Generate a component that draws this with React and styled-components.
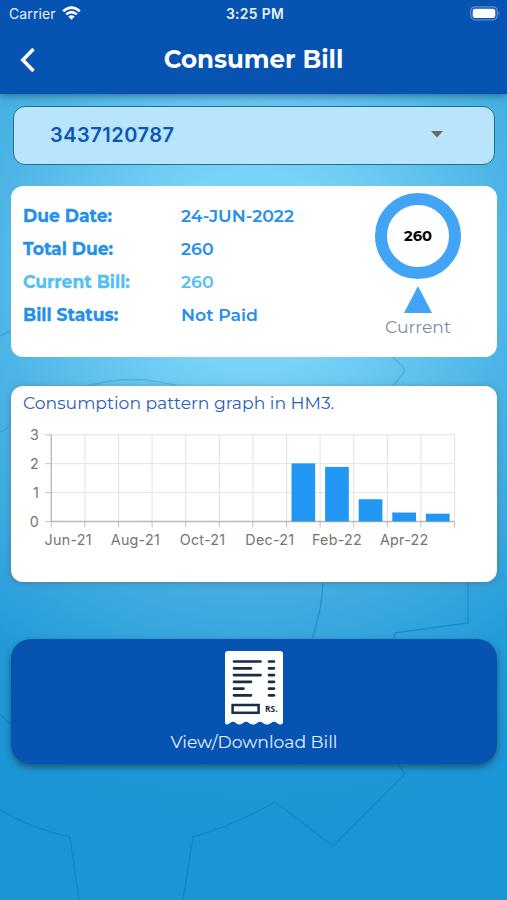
import React from 'react';

import styled, { createGlobalStyle } from 'styled-components';


/////

const GlobalStyle = createGlobalStyle`
    *{
        box-sizing: border-box;
    }
    body{
        margin: 0;
        font-family: Montserrat, Inter, "Liberation Sans", sans-serif;
    }
`

const PageWrapper = styled.div`
    position: relative;
    height: 900px;
    overflow: hidden;
    background: radial-gradient(circle at 253px 270px,
        #80d8fb 0px, #79d2f7 100px, #4db5e6 258px, #3eabe0 340px, #229ad7 450px, #1b95d5 560px);
`

const GearLines = styled.svg`
    position: absolute;
    top: 0;
    left: 0;
    fill: none;
    stroke: #0878b8;
    stroke-width: 1.4;
    opacity: 0.48;
`

const Header = styled.header`
    position: relative;
    height: 94px;
    background-color: #0753b2;
    color: #fff;
    box-shadow: 0 2px 7px rgba(30, 70, 95, 0.6);
`

const StatusBar = styled.div`
    display: grid;
    grid-template-columns: 1fr auto 1fr;
    align-items: center;
    height: 27px;
    padding: 0 6px 0 9px;
    font-family: Inter, sans-serif;
    font-size: 14px;
    color: #e9f1ff;
    .carrier{
        display: flex;
        align-items: center;
        gap: 6px;
        letter-spacing: 0.1px;
    }
    .clock{
        font-size: 13.8px;
        font-weight: 600;
        letter-spacing: 0.35px;
    }
    .battery{
        justify-self: end;
    }
    svg{
        display: block;
    }
`

const TitleBar = styled.div`
    display: grid;
    grid-template-columns: 56px 1fr 56px;
    align-items: center;
    height: 65px;
    h1{
        margin: 0;
        padding-bottom: 2px;
        text-align: center;
        font-size: 24.5px;
        font-weight: 700;
    }
    svg{
        display: block;
        margin-left: 20px;
    }
`

const Content = styled.main`
    position: relative;
    display: flex;
    flex-direction: column;
    padding: 12px 10px 0 11px;
`

const AccountSelect = styled.div`
    display: flex;
    align-items: center;
    justify-content: space-between;
    height: 59px;
    margin: 0 2px 0 2px;
    padding: 0 51px 2px 36px;
    border: 1.5px solid #286f86;
    border-radius: 12px;
    background-color: #b8e5fc;
    color: #0d56b3;
    font-family: Inter, sans-serif;
    font-size: 20px;
    font-weight: 600;
    letter-spacing: 0.5px;
`

const Card = styled.section`
    border-radius: 12px;
    background-color: #fff;
`

const BillCard = styled(Card)`
    display: flex;
    justify-content: space-between;
    height: 171px;
    margin-top: 21px;
    padding: 7px 36px 0 12px;
`

const BillRows = styled.div`
    padding-top: 6px;
`

const BillRow = styled.div`
    display: grid;
    grid-template-columns: 158px auto;
    height: 33px;
    line-height: 33px;
    font-size: 17.3px;
    font-weight: 600;
    color: ${props => props.$light ? '#55bff2' : '#2590e9'};
    .row-title{
        font-size: 17.2px;
        font-weight: 700;
        -webkit-text-stroke: 0.3px currentColor;
    }
`

const Gauge = styled.div`
    display: flex;
    flex-direction: column;
    align-items: center;
    width: 86px;
    .ring{
        display: flex;
        align-items: center;
        justify-content: center;
        width: 86px;
        height: 86px;
        border: 12px solid #42a4f5;
        border-radius: 50%;
        font-size: 14.7px;
        font-weight: 700;
        color: #000;
    }
    .arrow{
        width: 0;
        height: 0;
        margin-top: 7px;
        border: solid transparent;
        border-width: 0 14.5px 27px;
        border-bottom-color: #42a4f5;
    }
    .gauge-label{
        margin-top: 3px;
        font-size: 17.2px;
        line-height: 21px;
        color: #78909c;
    }
`

const GraphCard = styled(Card)`
    height: 196px;
    margin-top: 29px;
    box-shadow: 0 1px 6px rgba(85, 105, 115, 0.6);
    .graph-title{
        height: 35px;
        padding-left: 12px;
        line-height: 33px;
        font-size: 17.2px;
        color: #2c5ebb;
    }
    svg{
        display: block;
    }
    text{
        font-family: Inter, sans-serif;
        font-size: 14.3px;
        letter-spacing: 0.25px;
        fill: #747474;
    }
`

const BillButton = styled.button`
    display: flex;
    flex-direction: column;
    align-items: center;
    height: 125px;
    margin-top: 57px;
    padding: 12px 0 0;
    border: 0;
    border-radius: 20px;
    background-color: #0753b2;
    box-shadow: 0 3px 6px rgba(25, 65, 85, 0.75);
    color: #e4efff;
    font-family: inherit;
    font-size: 17.2px;
    line-height: 20px;
    svg{
        display: block;
        margin-bottom: 7px;
    }
`


/////////////

const billRows = [
    { title: 'Due Date:', value: '24-JUN-2022' },
    { title: 'Total Due:', value: '260' },
    { title: 'Current Bill:', value: '260', light: true },
    { title: 'Bill Status:', value: 'Not Paid' },
];

const months = ['Jun-21', 'Jul-21', 'Aug-21', 'Sep-21', 'Oct-21', 'Nov-21',
                'Dec-21', 'Jan-22', 'Feb-22', 'Mar-22', 'Apr-22', 'May-22'];
const usage = [0, 0, 0, 0, 0, 0, 0, 2.01, 1.89, 0.77, 0.31, 0.27];


const ConsumptionGraph = () => {

    const left = 40.3;
    const bottom = 100.5;
    const step = 33.6;
    const unit = 28.9;
    const right = left + step * 12;

    return (
        <svg width="486" height="140" viewBox="0 0 486 140">
            {/* grid */}
            {[0, 1, 2, 3].map((n) => (
                <g key={n}>
                    <path d={`M${left} ${bottom - n * unit}H${right}`} stroke="#e2e2e2" />
                    <path d={`M${left - 6} ${bottom - n * unit}H${left}`} stroke="#c0c0c0" />
                    <text x="28" y={bottom - n * unit + 5.2} textAnchor="end">{n}</text>
                </g>
            ))}
            {Array.from({ length: 13 }, (_, i) => (
                <g key={i}>
                    <path d={`M${left + i * step} ${bottom - unit * 3}V${bottom}`} stroke="#e2e2e2" />
                    <path d={`M${left + i * step} ${bottom}v6`} stroke="#c0c0c0" />
                </g>
            ))}
            <path d={`M${left} ${bottom - unit * 3}V${bottom}H${right}`} fill="none" stroke="#b8b8b8" strokeWidth="1.3" />

            {/* bars */}
            {usage.map((v, i) => v > 0 && (
                <rect key={i} x={left + i * step + 5} y={bottom - v * unit}
                      width="23.7" height={v * unit} fill="#2196f3" />
            ))}
            {months.map((m, i) => i % 2 === 0 && (
                <text key={m} x={left + (i + 0.5) * step + 0.1} y="124" textAnchor="middle">{m}</text>
            ))}
        </svg>
    );
};


const ReceiptIcon = () => (
    <svg width="58" height="74" viewBox="0 0 58 74">
        <path fill="#fff" d="M3 0H55Q58 0 58 3V72Q55.5 75 52 72Q49 69.5 46 72Q42 75 38 72Q35 69.5 32 72Q28 75 24 72Q21 69.5 18 72Q14 75 11 72Q8 69.5 5 72Q0 75.5 0 71V3Q0 0 3 0Z" />
        <path stroke="#182e48" strokeWidth="2.7" strokeLinecap="round" fill="none"
              d="M9 10.5H35.5M9 17.3H26M9 24.1H35.5M9 30.8H26M9 37.6H18.5M9 44.3H26M44 10.5H49M44 17.3H49M44 24.1H49M44 30.8H49M44 37.6H49M44 44.3H49" />
        <rect x="7.6" y="54" width="26" height="7.8" fill="none" stroke="#182e48" strokeWidth="2.5" />
        <text x="40" y="61.2" fontFamily="Open Sans, sans-serif" fontSize="8.4" fontWeight="700" fill="#182e48">RS.</text>
    </svg>
);


const App = () => {

    return (

        <PageWrapper>

            <GlobalStyle />

            {/* gear outlines in the background */}
            <GearLines width="507" height="900" viewBox="0 0 507 900">
                <path d="M0 336L12 330M392 357Q401 364 405 370Q401 376 394 385" opacity="0.5" />
                <path d="M0 432Q7 430 12 421M82 388Q132 371 183 388" opacity="0.5" />
                <path d="M323 581Q322 612 311 642M468 581V623L395 633L393 642" />
                <path d="M0 715L12 725M0 810Q33 829 70 837L79 900M183 900L193 837Q235 825 275 802L333 846L405 774L397 763" />
            </GearLines>


            <Header>
                <StatusBar>
                    <div className="carrier">
                        Carrier
                        <svg width="19" height="15" viewBox="0 0 19 15">
                            <path d="M1.2 5.3Q9.5 -2 17.8 5.3M4.2 8.4Q9.5 3.8 14.8 8.4" fill="none" stroke="#fff" strokeWidth="2.5" />
                            <path d="M6.3 10.6Q9.5 7.8 12.7 10.6L9.5 13.8Z" fill="#fff" />
                        </svg>
                    </div>
                    <div className="clock">3:25 PM</div>
                    <svg className="battery" width="31" height="15" viewBox="0 0 31 15">
                        <rect x="0.8" y="0.8" width="26.4" height="13" rx="4" fill="none" stroke="#5c8fd0" strokeWidth="1.2" />
                        <rect x="2.7" y="2.7" width="22.6" height="9.2" rx="2.2" fill="#fff" />
                        <path d="M28.5 5Q30.5 7.3 28.5 9.6Z" fill="#5c8fd0" />
                    </svg>
                </StatusBar>
                <TitleBar>
                    <svg width="16" height="26" viewBox="0 0 16 26">
                        <path d="M13.5 2L2.8 13L13.5 24" fill="none" stroke="#fff" strokeWidth="3.5" />
                    </svg>
                    <h1>Consumer Bill</h1>
                </TitleBar>
            </Header>


            <Content>

                <AccountSelect>
                    <span>3437120787</span>
                    <svg width="12" height="7" viewBox="0 0 12 7">
                        <path d="M0 0H12L6 6.5Z" fill="#686b64" />
                    </svg>
                </AccountSelect>


                <BillCard>
                    <BillRows>
                        {billRows.map((row) => (
                            <BillRow key={row.title} $light={row.light}>
                                <div className="row-title">{row.title}</div>
                                <div>{row.value}</div>
                            </BillRow>
                        ))}
                    </BillRows>
                    <Gauge>
                        <div className="ring">260</div>
                        <div className="arrow" />
                        <div className="gauge-label">Current</div>
                    </Gauge>
                </BillCard>


                <GraphCard>
                    <div className="graph-title">Consumption pattern graph in HM3.</div>
                    <ConsumptionGraph />
                </GraphCard>


                <BillButton type="button">
                    <ReceiptIcon />
                    View/Download Bill
                </BillButton>

            </Content>

        </PageWrapper>
    );
};

export default App;
